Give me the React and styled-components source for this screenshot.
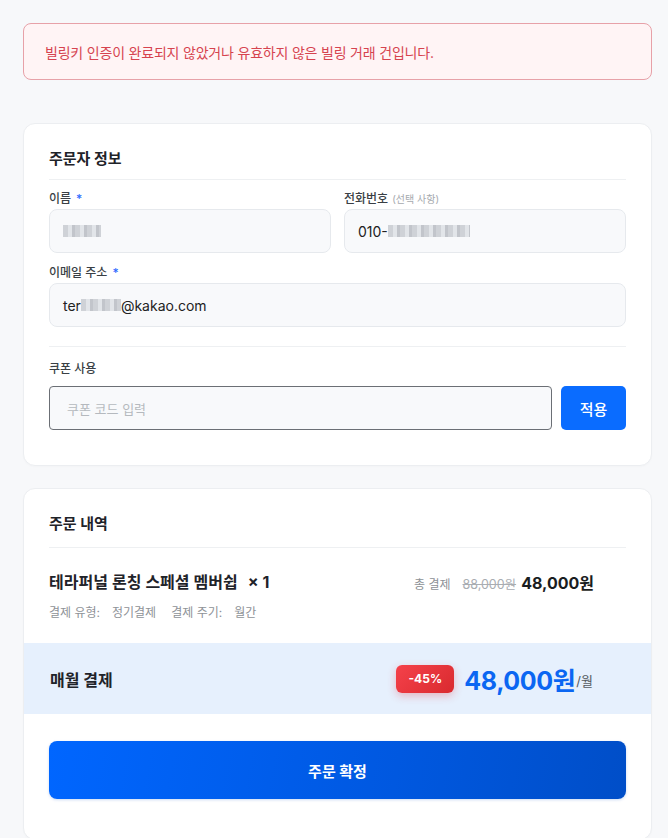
import React from "react";
import styled, { createGlobalStyle } from "styled-components";

const Global = createGlobalStyle`
  html, body { margin: 0; padding: 0; }
  body {
    background: #f7f8fa;
    font-family: Inter, "Noto Sans CJK KR", "Noto Sans", sans-serif;
    color: #1f2329;
  }
  * { box-sizing: border-box; }
`;

const Page = styled.div`
  padding: 23px 16px 0 23px;
  display: flex;
  flex-direction: column;
`;

const Alert = styled.div`
  height: 57px;
  display: flex;
  align-items: center;
  padding: 0 21px;
  background: #fff4f5;
  border: 1px solid #e7a1a8;
  border-radius: 8px;
  color: #d6434f;
  font-size: 14px;
  letter-spacing: -0.2px;
  margin-bottom: 43px;
`;

const Card = styled.section`
  background: #fff;
  border: 1px solid #eceef1;
  border-radius: 12px;
  padding: ${(p) => p.$pad || "24px 25px 35px"};
  margin-bottom: 22px;
  box-shadow: 0 1px 2px rgba(0, 0, 0, 0.02);
  overflow: hidden;
`;

const CardTitle = styled.h2`
  margin: 0;
  font-size: 15px;
  line-height: 22px;
  font-weight: 700;
  color: #1f2329;
  padding-bottom: ${(p) => p.$pb || 9}px;
  border-bottom: 1px solid #eef0f2;
`;

const Grid = styled.div`
  display: grid;
  grid-template-columns: 1fr 1fr;
  column-gap: 13px;
  margin-top: 10px;
`;

const Field = styled.div`
  display: flex;
  flex-direction: column;
  grid-column: ${(p) => (p.$full ? "1 / -1" : "auto")};
  margin-top: ${(p) => p.$mt || 0}px;
`;

const Label = styled.label`
  font-size: 12px;
  line-height: 18px;
  font-weight: 500;
  color: #3a3f45;
  margin-bottom: ${(p) => p.$mb ?? 1}px;
`;

const Req = styled.span`
  color: #2f6bff;
  margin-left: 5px;
`;

const Hint = styled.span`
  color: #a5a9ae;
  font-size: 10px;
  font-weight: 400;
  margin-left: 4px;
`;

const InputBox = styled.div`
  height: 44px;
  flex: ${(p) => (p.$grow ? "1 1 auto" : "0 0 auto")};
  display: flex;
  align-items: center;
  padding: 0 13px;
  background: #f8f9fb;
  border: 1px solid ${(p) => (p.$focus ? "#6b6f75" : "#e6e9ed")};
  border-radius: ${(p) => (p.$focus ? "4px" : "8px")};
  font-size: 14px;
  color: #222;
`;

const Placeholder = styled.span`
  color: #b5b9be;
  font-size: 13px;
  padding-left: 4px;
`;

const Blur = styled.span`
  display: inline-block;
  width: ${(p) => p.$w}px;
  height: 12px;
  background: repeating-linear-gradient(90deg, #c8ccd1 0 5px, #dfe2e6 5px 9px, #b9bdc3 9px 12px);
  filter: blur(0.6px);
  opacity: 0.85;
  vertical-align: middle;
`;

const Divider = styled.div`
  height: 1px;
  background: #eef0f2;
  margin: 19px 0 13px;
`;

const CouponRow = styled.div`
  display: flex;
  gap: 9px;
`;

const ApplyButton = styled.button`
  width: 65px;
  height: 44px;
  border: none;
  border-radius: 5px;
  background: #0a6cff;
  color: #fff;
  font-family: inherit;
  font-size: 15px;
  font-weight: 500;
`;

const OrderInner = styled.div`
  padding: 24px 25px 0;
`;

const ProductRow = styled.div`
  display: flex;
  align-items: center;
  justify-content: space-between;
  margin-top: 22px;
  padding-right: 32px;
`;

const ProductName = styled.div`
  font-size: 16px;
  line-height: 24px;
  font-weight: 600;
  color: #1f2329;
  display: flex;
  gap: 10px;
`;

const Qty = styled.span`
  font-weight: 700;
`;

const Total = styled.div`
  display: flex;
  align-items: baseline;
  gap: 5px;
`;

const TotalLabel = styled.span`
  font-size: 12px;
  color: #8d9196;
  margin-right: 7px;
`;

const OldPrice = styled.span`
  font-size: 12.5px;
  color: #a9adb2;
  text-decoration: line-through;
`;

const Price = styled.span`
  font-size: 16px;
  font-weight: 700;
  color: #1a1d21;
`;

const Details = styled.div`
  display: flex;
  gap: 15px;
  margin-top: 10px;
  font-size: 12px;
  line-height: 18px;
  color: #8e9297;
`;

const Detail = styled.span`
  display: flex;
  gap: 12px;
`;

const Band = styled.div`
  margin-top: 21px;
  height: 71px;
  background: #e6f0fd;
  display: flex;
  align-items: center;
  justify-content: space-between;
  padding: 0 58px 0 26px;
`;

const BandLabel = styled.span`
  font-size: 16px;
  font-weight: 700;
  color: #1f2329;
`;

const BandRight = styled.div`
  display: flex;
  align-items: center;
  gap: 10px;
`;

const Badge = styled.span`
  width: 58px;
  height: 28px;
  border-radius: 6px;
  background: linear-gradient(135deg, #f5414a, #d92a2f);
  color: #fff;
  font-size: 12px;
  font-weight: 700;
  display: flex;
  align-items: center;
  justify-content: center;
  box-shadow: 0 3px 8px rgba(230, 50, 60, 0.3);
`;

const BigPrice = styled.span`
  font-size: 25px;
  font-weight: 700;
  color: #0b66f2;
  letter-spacing: -0.4px;
`;

const PerMonth = styled.span`
  font-size: 13px;
  color: #555a60;
  align-self: flex-end;
  margin-left: -9px;
  margin-bottom: 7px;
`;

const ConfirmWrap = styled.div`
  padding: 27px 25px 40px;
`;

const ConfirmButton = styled.button`
  width: 100%;
  height: 58px;
  border: none;
  border-radius: 8px;
  background: linear-gradient(100deg, #0066ff 0%, #0058e0 60%, #004ec8 100%);
  color: #fff;
  font-family: inherit;
  font-size: 15px;
  font-weight: 700;
  box-shadow: 0 1px 3px rgba(0, 80, 200, 0.2);
`;

export default function App() {
  return (
    <>
      <Global />
      <Page>
        <Alert>빌링키 인증이 완료되지 않았거나 유효하지 않은 빌링 거래 건입니다.</Alert>

        <Card>
          <CardTitle>주문자 정보</CardTitle>
          <Grid>
            <Field>
              <Label>
                이름<Req>*</Req>
              </Label>
              <InputBox>
                <Blur $w={38} />
              </InputBox>
            </Field>
            <Field>
              <Label>
                전화번호<Hint>(선택 사항)</Hint>
              </Label>
              <InputBox>
                010-<Blur $w={82} />
              </InputBox>
            </Field>
            <Field $full $mt={11}>
              <Label>
                이메일 주소<Req>*</Req>
              </Label>
              <InputBox>
                ter<Blur $w={40} />@kakao.com
              </InputBox>
            </Field>
          </Grid>
          <Divider />
          <Field>
            <Label $mb={8}>쿠폰 사용</Label>
            <CouponRow>
              <InputBox $focus $grow>
                <Placeholder>쿠폰 코드 입력</Placeholder>
              </InputBox>
              <ApplyButton>적용</ApplyButton>
            </CouponRow>
          </Field>
        </Card>

        <Card $pad="0">
          <OrderInner>
            <CardTitle $pb={12}>주문 내역</CardTitle>
            <ProductRow>
              <ProductName>
                테라퍼널 론칭 스페셜 멤버쉽 <Qty>× 1</Qty>
              </ProductName>
              <Total>
                <TotalLabel>총 결제</TotalLabel>
                <OldPrice>88,000원</OldPrice>
                <Price>48,000원</Price>
              </Total>
            </ProductRow>
            <Details>
              <Detail>
                <span>결제 유형:</span>
                <span>정기결제</span>
              </Detail>
              <Detail>
                <span>결제 주기:</span>
                <span>월간</span>
              </Detail>
            </Details>
          </OrderInner>
          <Band>
            <BandLabel>매월 결제</BandLabel>
            <BandRight>
              <Badge>-45%</Badge>
              <BigPrice>48,000원</BigPrice>
              <PerMonth>/월</PerMonth>
            </BandRight>
          </Band>
          <ConfirmWrap>
            <ConfirmButton>주문 확정</ConfirmButton>
          </ConfirmWrap>
        </Card>
      </Page>
    </>
  );
}
